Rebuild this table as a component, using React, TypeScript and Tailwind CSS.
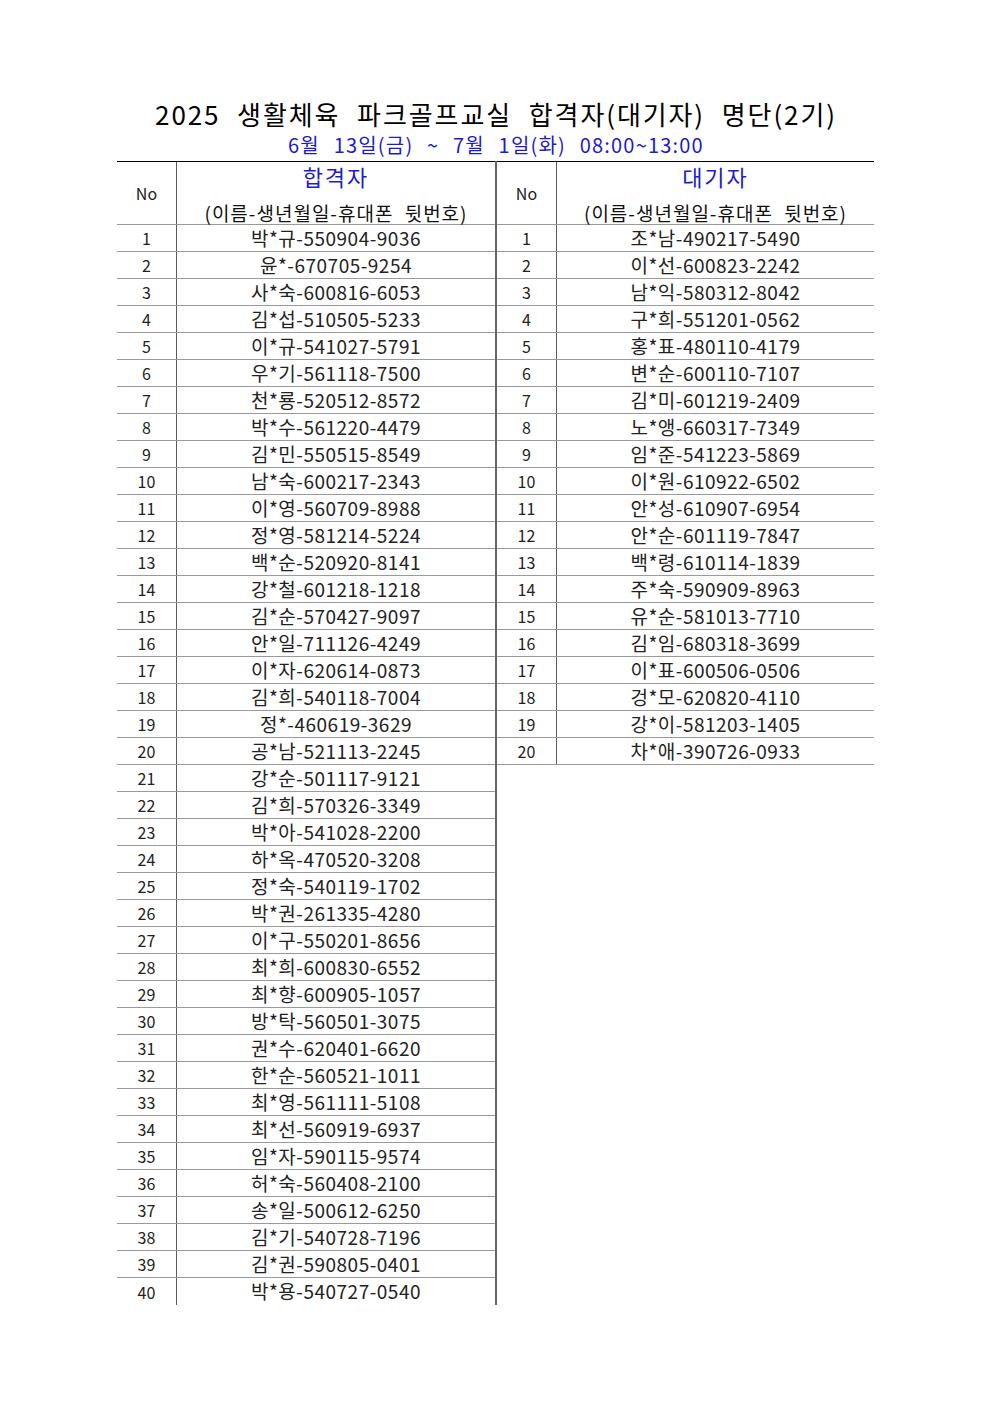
const passed = [
  "박*규-550904-9036",
  "윤*-670705-9254",
  "사*숙-600816-6053",
  "김*섭-510505-5233",
  "이*규-541027-5791",
  "우*기-561118-7500",
  "천*룡-520512-8572",
  "박*수-561220-4479",
  "김*민-550515-8549",
  "남*숙-600217-2343",
  "이*영-560709-8988",
  "정*영-581214-5224",
  "백*순-520920-8141",
  "강*철-601218-1218",
  "김*순-570427-9097",
  "안*일-711126-4249",
  "이*자-620614-0873",
  "김*희-540118-7004",
  "정*-460619-3629",
  "공*남-521113-2245",
  "강*순-501117-9121",
  "김*희-570326-3349",
  "박*아-541028-2200",
  "하*옥-470520-3208",
  "정*숙-540119-1702",
  "박*권-261335-4280",
  "이*구-550201-8656",
  "최*희-600830-6552",
  "최*향-600905-1057",
  "방*탁-560501-3075",
  "권*수-620401-6620",
  "한*순-560521-1011",
  "최*영-561111-5108",
  "최*선-560919-6937",
  "임*자-590115-9574",
  "허*숙-560408-2100",
  "송*일-500612-6250",
  "김*기-540728-7196",
  "김*권-590805-0401",
  "박*용-540727-0540",
];

const waiting = [
  "조*남-490217-5490",
  "이*선-600823-2242",
  "남*익-580312-8042",
  "구*희-551201-0562",
  "홍*표-480110-4179",
  "변*순-600110-7107",
  "김*미-601219-2409",
  "노*앵-660317-7349",
  "임*준-541223-5869",
  "이*원-610922-6502",
  "안*성-610907-6954",
  "안*순-601119-7847",
  "백*령-610114-1839",
  "주*숙-590909-8963",
  "유*순-581013-7710",
  "김*임-680318-3699",
  "이*표-600506-0506",
  "겅*모-620820-4110",
  "강*이-581203-1405",
  "차*애-390726-0933",
];

function Header({ title }: { title: string }) {
  return (
    <div className="flex h-[64px] border-t border-b border-t-black border-b-[#9a9a9a]">
      <div className="flex w-[60px] shrink-0 items-center justify-center border-r border-[#5a5a5a] text-[16px] text-[#222]">
        No
      </div>
      <div className="flex flex-1 flex-col items-center justify-between">
        <div className="text-[22px] leading-[28px] tracking-[2px] text-[#1c1ccc]">{title}</div>
        <div className="text-[19px] leading-[22px] tracking-[1px] text-[#111] [word-spacing:6px]">
          (이름-생년월일-휴대폰 뒷번호)
        </div>
      </div>
    </div>
  );
}

function Rows({ items, lastLine }: { items: string[]; lastLine: boolean }) {
  return (
    <div>
      {items.map((name, i) => {
        const line = lastLine || i < items.length - 1;
        return (
          <div
            key={i}
            className={
              line
                ? "flex h-[27px] border-b border-[#9a9a9a]"
                : "flex h-[27px]"
            }
          >
            <div className="flex w-[60px] shrink-0 items-center justify-center border-r border-[#5a5a5a] text-[16px] text-[#222]">
              {i + 1}
            </div>
            <div className="flex flex-1 items-center justify-center text-[19px] tracking-[0.5px] text-[#222]">
              {name}
            </div>
          </div>
        );
      })}
    </div>
  );
}

export default function App() {
  return (
    <div
      className="min-h-[1403px] w-[992px] bg-white"
      style={{ fontFamily: '"Noto Sans CJK KR", "Liberation Sans", sans-serif' }}
    >
      <div className="pt-[97px] text-center text-[26px] leading-[34px] tracking-[1.9px] text-black [word-spacing:9px]">
        2025 생활체육 파크골프교실 합격자(대기자) 명단(2기)
      </div>
      <div className="pb-[2px] text-center text-[20px] leading-[28px] tracking-[1.2px] text-[#1c1ccc] [word-spacing:8px]">
        6월 13일(금) ~ 7월 1일(화) 08:00~13:00
      </div>
      <div className="ml-[117px] flex w-[757px] items-start">
        <div className="w-[380px] border-r-2 border-[#666]">
          <Header title="합격자" />
          <Rows items={passed} lastLine={false} />
        </div>
        <div className="flex-1">
          <Header title="대기자" />
          <Rows items={waiting} lastLine={true} />
        </div>
      </div>
    </div>
  );
}
